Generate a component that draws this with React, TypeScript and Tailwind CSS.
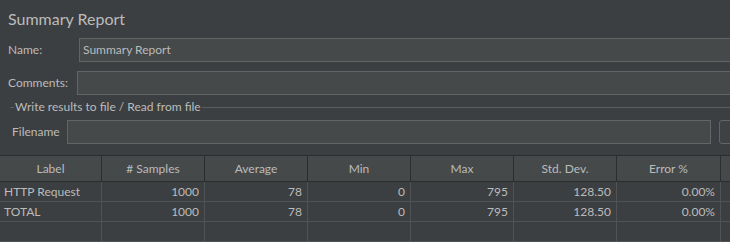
import React from "react";

const cols = ["Label", "# Samples", "Average", "Min", "Max", "Std. Dev.", "Error %"];
const widths = ["w-[102px]", "w-[103px]", "w-[103px]", "w-[103px]", "w-[103px]", "w-[103px]", "w-[104px]"];
const rows = [
  ["HTTP Request", "1000", "78", "0", "795", "128.50", "0.00%"],
  ["TOTAL", "1000", "78", "0", "795", "128.50", "0.00%"],
  ["", "", "", "", "", "", ""],
];

export default function App() {
  return (
    <div
      className="w-[730px] h-[242px] overflow-hidden bg-[#3c3f41] text-[#bbbbbb] text-[12px]"
      style={{ fontFamily: 'Lato, "Open Sans", sans-serif' }}
    >
      <div className="h-[38px] pl-[8px] pt-[7px] text-[16px] leading-[24px] text-[#bbbbbb]">Summary Report</div>
      <div className="flex items-center h-[24px]">
        <div className="w-[79px] shrink-0 pl-[8px]">Name:</div>
        <div className="w-[660px] shrink-0 h-[24px] border border-[#646464] bg-[#45494a] pl-[3px] leading-[22px] text-[#bbbbbb]">
          Summary Report
        </div>
      </div>
      <div className="flex items-center h-[24px] mt-[9px]">
        <div className="w-[77px] shrink-0 pl-[8px]">Comments:</div>
        <div className="w-[660px] shrink-0 h-[24px] border border-[#646464] bg-[#45494a]"></div>
      </div>
      <div className="relative h-[25px] ml-[10px]">
        <div className="absolute left-0 right-0 top-[12px] border-t border-[#5a5d5f]"></div>
        <div className="absolute left-[4px] top-[3px] bg-[#3c3f41] px-[1px] leading-[18px]">
          Write results to file / Read from file
        </div>
      </div>
      <div className="flex items-center h-[24px]">
        <div className="w-[67px] shrink-0 pl-[12px]">Filename</div>
        <div className="w-[644px] shrink-0 h-[24px] border border-[#646464] bg-[#45494a]"></div>
        <div className="ml-[8px] w-[30px] h-[24px] border border-[#646464] rounded-[3px] bg-[#3f4244] shrink-0"></div>
      </div>
      <div className="mt-[11px] border-t border-[#2b2d2e]">
        <div className="flex h-[26px] bg-[#45494a] border-b border-[#2b2d2e]">
          {cols.map((c, i) => (
            <div
              key={c}
              className={`${widths[i]} shrink-0 border-r border-[#2b2d2e] flex items-center justify-center`}
            >
              {c}
            </div>
          ))}
          <div className="flex-1"></div>
        </div>
        {rows.map((r, ri) => (
          <div key={ri} className="flex h-[20px] border-b border-[#505355]">
            {r.map((v, i) => (
              <div
                key={i}
                className={`${widths[i]} shrink-0 border-r border-[#505355] flex items-center leading-[19px] ${
                  i === 0 ? "justify-start pl-[4px]" : "justify-end pr-[5px]"
                }`}
              >
                {v}
              </div>
            ))}
            <div className="flex-1"></div>
          </div>
        ))}
      </div>
    </div>
  );
}
